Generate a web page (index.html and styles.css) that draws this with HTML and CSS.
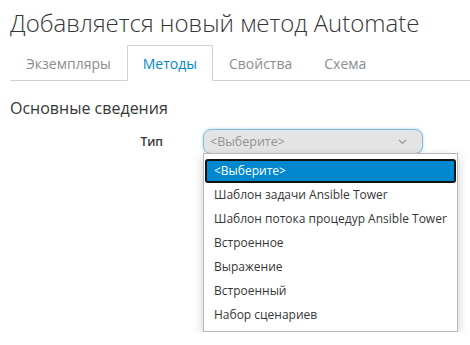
FILE: index.html
```html
<!DOCTYPE html>
<html lang="ru">
<head>
    <meta charset="UTF-8">
    <title>Добавляется новый метод Automate</title>
    <link rel="stylesheet" href="styles.css">
</head>
<body>

<div class="page">
    <h1>Добавляется новый метод Automate</h1>

    <ul class="tabs">
        <li><a href="#">Экземпляры</a></li>
        <li class="active"><a href="#">Методы</a></li>
        <li><a href="#">Свойства</a></li>
        <li><a href="#">Схема</a></li>
    </ul>

    <h3>Основные сведения</h3>

    <div class="form-row">
        <label class="form-label">Тип</label>
        <div class="select-wrap">
            <div class="select">
                <span>&lt;Выберите&gt;</span>
                <svg class="chevron" width="9" height="6" viewBox="0 0 9 6">
                    <path d="M1 1 L4.5 4.5 L8 1" fill="none" stroke="#9a9a9a" stroke-width="1.2"/>
                </svg>
            </div>
            <ul class="dropdown">
                <li class="selected">&lt;Выберите&gt;</li>
                <li>Шаблон задачи Ansible Tower</li>
                <li>Шаблон потока процедур Ansible Tower</li>
                <li>Встроенное</li>
                <li>Выражение</li>
                <li>Встроенный</li>
                <li>Набор сценариев</li>
            </ul>
        </div>
    </div>
</div>

</body>
</html>
```

FILE: styles.css
```css
body {
    margin: 0;
    font-family: "Open Sans", sans-serif;
    color: #363636;
    background-color: #fff;
}
.page {
    padding-left: 10px;
}
h1 {
    margin: 0;
    padding-top: 5px;
    font-size: 24px;
    font-weight: 300;
    line-height: 36px;
    color: #363636;
}
.tabs {
    display: flex;
    list-style: none;
    margin: 4px 0 0;
    padding: 0;
    border-bottom: 1px solid #d1d1d1;
}
.tabs li {
    margin-bottom: -1px;
}
.tabs a {
    display: block;
    padding: 0 15px;
    height: 34px;
    line-height: 35px;
    font-size: 14px;
    color: #8b8d8f;
    text-decoration: none;
    border: 1px solid transparent;
}
.tabs .active a {
    color: #0088ce;
    border-color: #d1d1d1;
    border-bottom-color: #fff;
    background-color: #fff;
}
h3 {
    margin: 17px 0 0;
    font-size: 16px;
    font-weight: 400;
    line-height: 20px;
}
.form-row {
    display: flex;
    align-items: flex-start;
    margin-top: 11px;
}
.form-label {
    width: 153px;
    height: 25px;
    line-height: 25px;
    text-align: right;
    font-size: 12px;
    font-weight: 600;
}
.select-wrap {
    margin-left: 40px;
}
.select {
    display: flex;
    align-items: center;
    justify-content: space-between;
    box-sizing: border-box;
    width: 220px;
    height: 25px;
    padding: 0 15px 0 6px;
    border: 1px solid #7fc0e8;
    border-radius: 8px;
    background-color: #e4e4e4;
    box-shadow: 0 0 3px rgba(102, 175, 233, 0.6);
    font-size: 12.5px;
    color: #939393;
}
.dropdown {
    box-sizing: border-box;
    width: 255px;
    margin: -1px 0 0;
    padding: 5px 1px 4px;
    list-style: none;
    background-color: #fff;
    border: 1px solid #b8b8b8;
    box-shadow: 0 4px 10px rgba(0, 0, 0, 0.2);
}
.dropdown li {
    box-sizing: border-box;
    height: 24px;
    line-height: 20px;
    padding: 0 7px;
    border: 2px solid transparent;
    font-size: 12px;
    color: #363636;
    white-space: nowrap;
}
.dropdown .selected {
    background-color: #0088ce;
    border-color: #111;
    border-radius: 3px;
    color: #fff;
}
```
